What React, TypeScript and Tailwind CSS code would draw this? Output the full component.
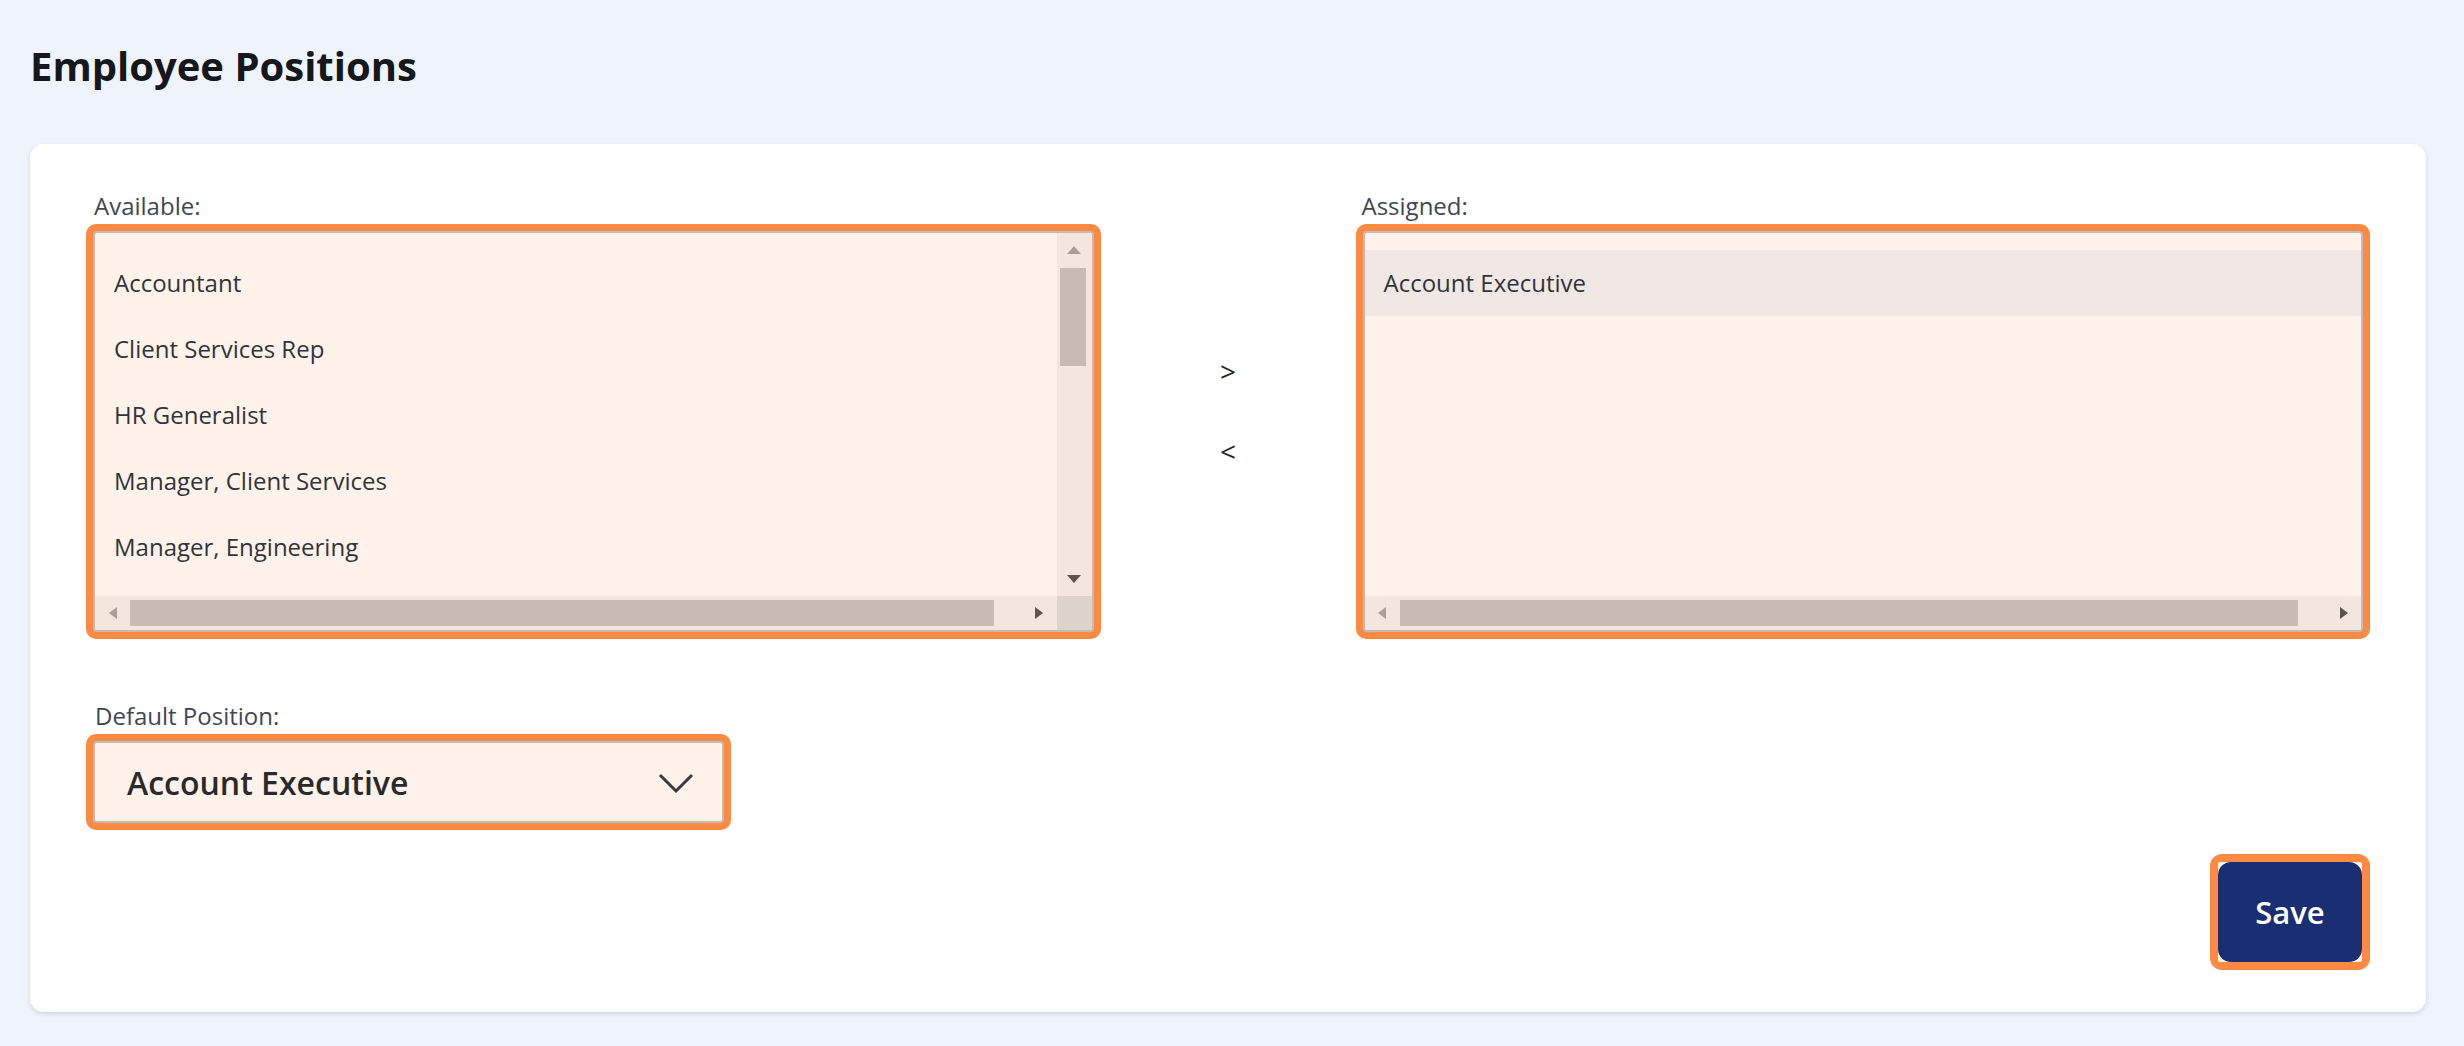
// App.tsx
//
// Employee Positions: dual listbox (available / assigned), default position
// select and a Save button. Scrollbars are drawn by hand so they match the
// themed look of the original control.

// Only the rows that fit in the listbox are rendered; the scrollbar shows there are more.
const available = [
  'Accountant',
  'Client Services Rep',
  'HR Generalist',
  'Manager, Client Services',
  'Manager, Engineering',
];

const assigned = ['Account Executive'];

/** Small scrollbar arrow. dir = up | down | left | right */
function Arrow({ dir, dim }: { dir: 'up' | 'down' | 'left' | 'right'; dim?: boolean }) {
  const fill = dim ? '#a99e98' : '#5e544e';
  if (dir === 'up' || dir === 'down') {
    return (
      <svg width="14" height="8" viewBox="0 0 14 8">
        <polygon points={dir === 'up' ? '7,0 14,8 0,8' : '0,0 14,0 7,8'} fill={fill} />
      </svg>
    );
  }
  return (
    <svg width="8" height="12" viewBox="0 0 8 12">
      <polygon points={dir === 'right' ? '0,0 8,6 0,12' : '8,0 0,6 8,12'} fill={fill} />
    </svg>
  );
}

/** Horizontal scrollbar strip at the bottom of a listbox. */
function HScroll() {
  return (
    <div className="flex h-[34px] flex-1 items-center bg-[#f2e6de]">
      <div className="flex w-[35px] justify-center">
        <Arrow dir="left" dim />
      </div>
      <div className="mr-[28px] h-[26px] flex-1 bg-[#c8bbb3]" />
      <div className="flex w-[35px] justify-center">
        <Arrow dir="right" />
      </div>
    </div>
  );
}

interface ListBoxProps {
  items: string[];
  selected?: string;
  vertical?: boolean;
}

/** Orange-ringed listbox with themed scrollbars. */
function ListBox({ items, selected, vertical }: ListBoxProps) {
  return (
    <div className="h-[415px] rounded-[10px] bg-[#fc8a42] p-[7px]">
      <div className="flex h-full flex-col overflow-hidden rounded-[4px] border-2 border-[#c6bbb4] bg-[#fef2ea]">
        <div className="flex min-h-0 flex-1">
          <ul className="min-w-0 flex-1 pt-[17px]">
            {items.map((item) => (
              <li
                key={item}
                className={`h-[66px] whitespace-nowrap pl-[19px] text-[24px] leading-[66px] text-[#30353b] ${
                  item === selected ? 'bg-[#f1e8e5]' : ''
                }`}
              >
                {item}
              </li>
            ))}
          </ul>
          {vertical && (
            <div className="flex w-[35px] flex-col bg-[#f2e6de]">
              <div className="flex h-[35px] items-center justify-center pb-[2px]">
                <Arrow dir="up" dim />
              </div>
              <div className="mx-auto h-[98px] w-[26px] -translate-x-[1px] bg-[#c8bbb3]" />
              <div className="flex-1" />
              <div className="flex h-[35px] items-center justify-center">
                <Arrow dir="down" />
              </div>
            </div>
          )}
        </div>
        <div className="flex">
          <HScroll />
          {vertical && <div className="h-[34px] w-[35px] bg-[#dfd4cc]" />}
        </div>
      </div>
    </div>
  );
}

export default function App() {
  return (
    <div className="min-h-screen bg-[#eff3fb] pb-[35px] pl-[30px] pr-[38px] font-['Open_Sans',sans-serif]">
      <h1 className="pt-[42px] text-[40px] font-bold leading-[48px] text-[#15171c]">Employee Positions</h1>

      <div className="mt-[54px] rounded-[14px] bg-white px-[56px] pb-[42px] pt-[46px] shadow-[0_2px_4px_rgba(140,156,196,0.35)]">
        <div className="grid grid-cols-[1fr_255px_1fr]">
          <div>
            <div className="mb-[2px] pl-[8px] text-[24px] leading-[32px] text-[#3e4852]">Available:</div>
            <ListBox items={available} vertical />
          </div>

          <div className="flex flex-col items-center pt-[165px] text-[28px] leading-[32px] text-[#222428]">
            <button className="w-[40px]">&gt;</button>
            <button className="mt-[48px] w-[40px]">&lt;</button>
          </div>

          <div>
            <div className="mb-[2px] pl-[6px] text-[24px] leading-[32px] text-[#3e4852]">Assigned:</div>
            <ListBox items={assigned} selected="Account Executive" />
          </div>
        </div>

        <div className="mt-[61px] w-[645px]">
          <div className="mb-[2px] pl-[9px] text-[24px] leading-[32px] text-[#3e4852]">Default Position:</div>
          <div className="rounded-[10px] bg-[#fc8a42] p-[7px]">
            <div className="flex h-[82px] items-center justify-between rounded-[4px] border-2 border-[#c6bbb4] bg-[#fef2ea] pl-[32px] pr-[28px] pt-[2px]">
              <span className="text-[32px] font-semibold text-[#2a2a2a]">Account Executive</span>
              <svg width="36" height="22" viewBox="0 0 36 22" fill="none">
                <polyline points="2,3 18,19 34,3" stroke="#3a3a3a" strokeWidth="3" />
              </svg>
            </div>
          </div>
        </div>

        <div className="mt-[24px] flex justify-end">
          <div className="rounded-[12px] bg-[#fc8a42] p-[8px]">
            <div className="rounded-[2px] bg-[#fef2ea]">
              <button className="h-[100px] w-[144px] rounded-[13px] bg-[#1a2e72] text-[31px] font-semibold text-white">
                Save
              </button>
            </div>
          </div>
        </div>
      </div>
    </div>
  );
}
